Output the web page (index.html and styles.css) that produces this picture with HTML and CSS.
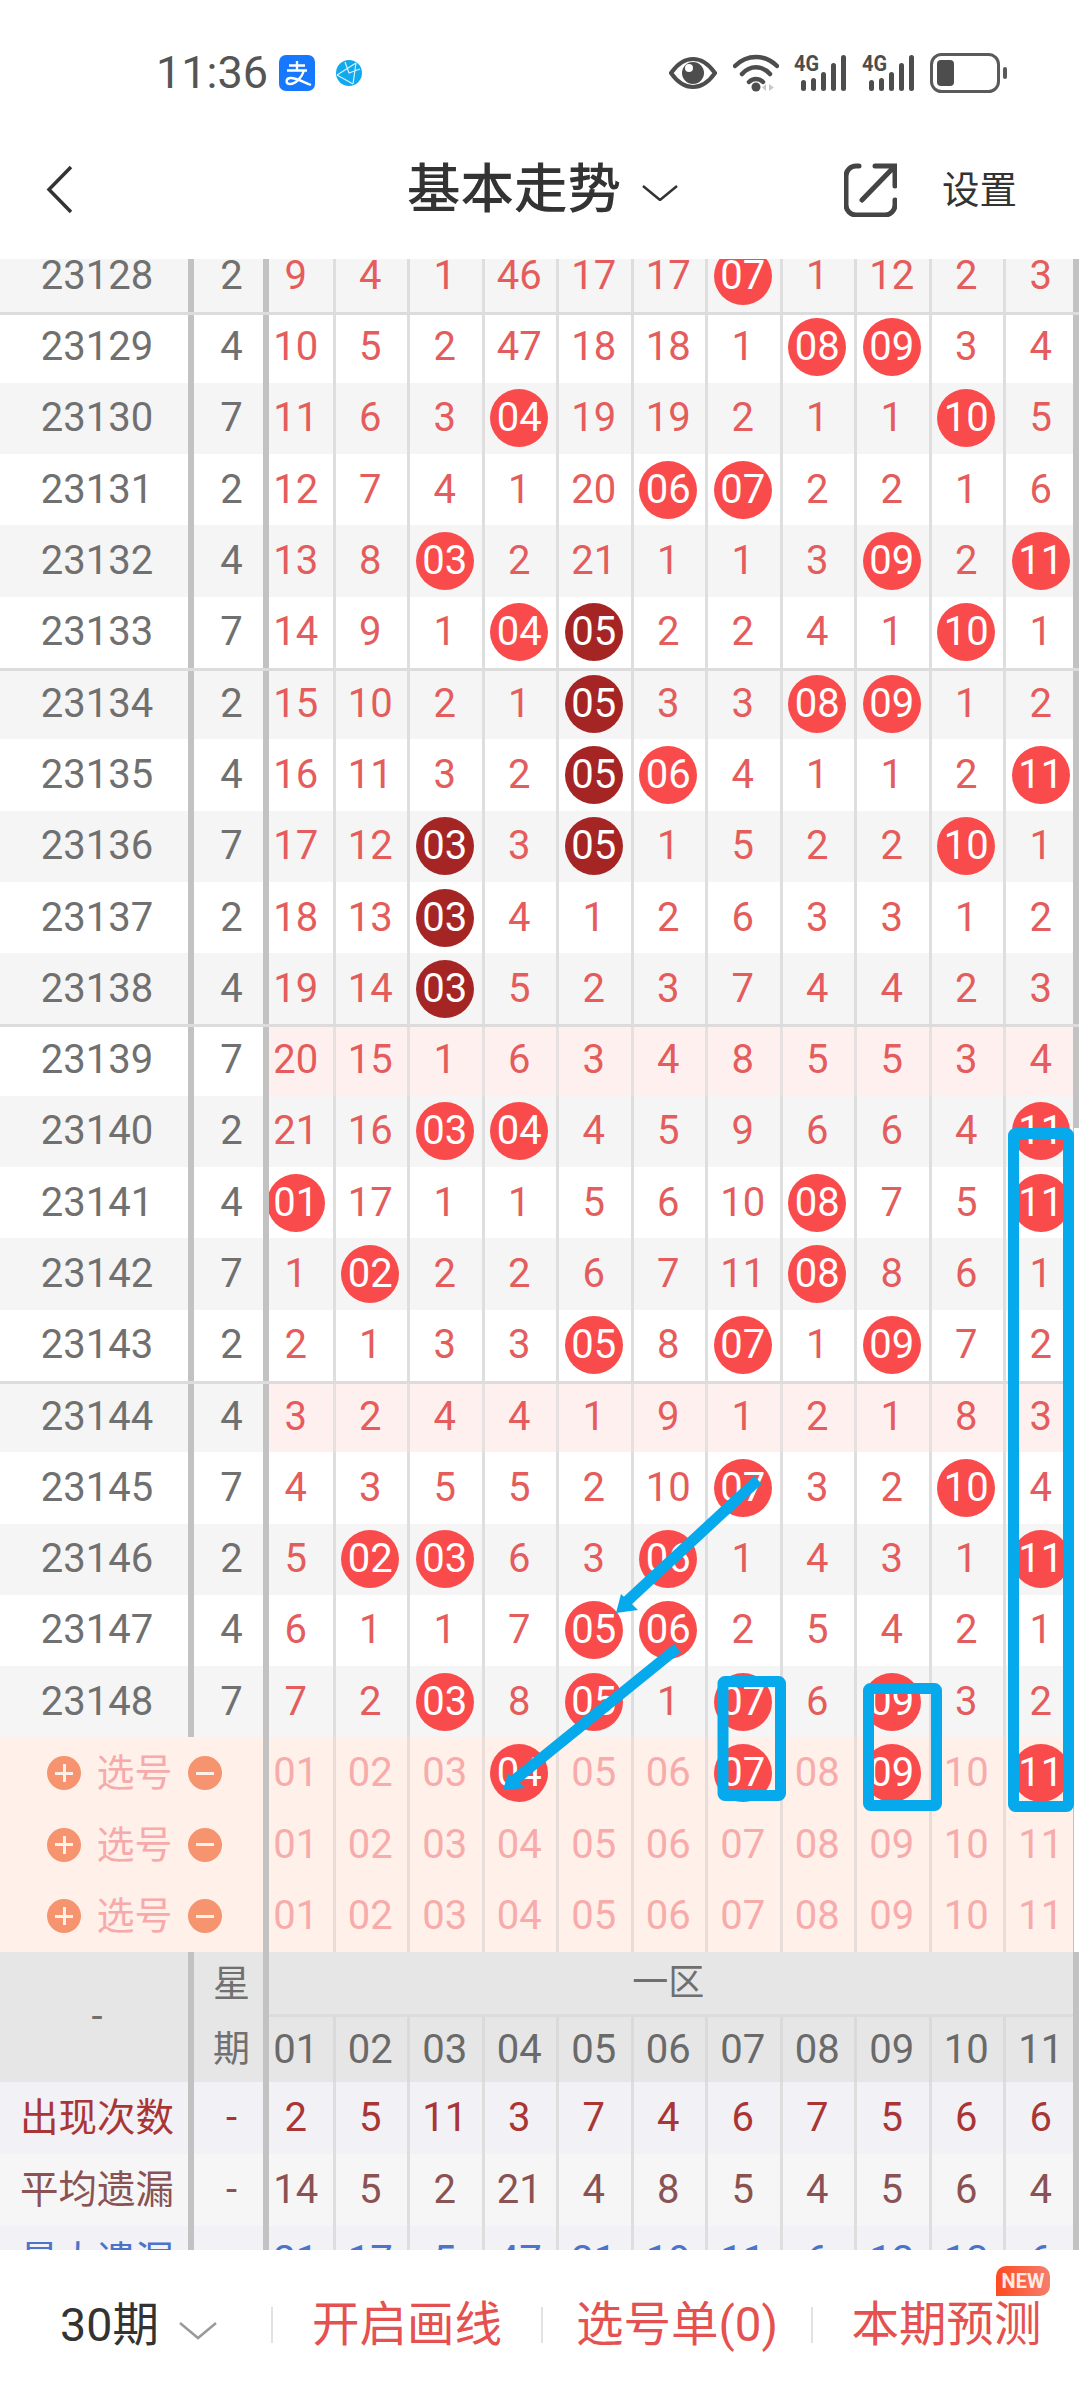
FILE: index.html
```html
<!DOCTYPE html>
<html lang="zh">
<head>
<meta charset="utf-8">
<title>基本走势</title>
<link rel="stylesheet" href="styles.css">
</head>
<body>
<div class="page">
  <header class="status">
    <span class="time">11:36</span>
    <svg class="alipay" viewBox="0 0 36 36"><rect width="36" height="36" rx="7" fill="#1677ff"/><path d="M10 10.500H26M18 6V15M8 15.500H28M25 15.500C23 22 17 29 11 29C6.500 29 6.500 23.500 11 23C17 22.500 24 27 32 30" fill="none" stroke="#fff" stroke-width="2.400"/></svg>
    <svg class="globe" viewBox="0 0 26 26"><circle cx="13" cy="13" r="13" fill="#10a9ee"/><path d="M1 15L20 3M1 15L17 24M20 3L17 24M9 2L13 13L24 9" fill="none" stroke="#d5f2ff" stroke-width="1.200"/></svg>
    <svg class="eye" viewBox="0 0 48 32"><path d="M2 16C9 6 16 2 24 2S39 6 46 16C39 26 32 30 24 30S9 26 2 16Z" fill="none" stroke="#4d4d4d" stroke-width="4"/><circle cx="24" cy="16" r="11" fill="#4d4d4d"/><circle cx="20" cy="11" r="4" fill="#fff"/></svg>
    <svg class="wifi" viewBox="0 0 46 38"><path d="M2 12C14 0 32 0 44 12M9 20C17 11 29 11 37 20M16 28C20 24 26 24 30 28" fill="none" stroke="#4d4d4d" stroke-width="4.500" stroke-linecap="round"/><circle cx="23" cy="33" r="4.500" fill="#4d4d4d"/><path d="M33 30V37L29 33.500ZM36 30V37L41 33.500Z" fill="#c8c8c8"/></svg>
    <svg class="signal" viewBox="0 0 53 38"><text x="0" y="17" class="g4" textLength="25" lengthAdjust="spacingAndGlyphs">4G</text><rect x="7" y="26" width="5" height="11" rx="2.500"/><rect x="17" y="24" width="5" height="13" rx="2.500"/><rect x="27" y="18" width="5" height="19" rx="2.500"/><rect x="37" y="9" width="5" height="28" rx="2.500"/><rect x="47" y="1" width="5" height="36" rx="2.500"/></svg>
    <svg class="signal second" viewBox="0 0 53 38"><text x="0" y="17" class="g4" textLength="25" lengthAdjust="spacingAndGlyphs">4G</text><rect x="7" y="26" width="5" height="11" rx="2.500"/><rect x="17" y="24" width="5" height="13" rx="2.500"/><rect x="27" y="18" width="5" height="19" rx="2.500"/><rect x="37" y="9" width="5" height="28" rx="2.500"/><rect x="47" y="1" width="5" height="36" rx="2.500"/></svg>
    <svg class="battery" viewBox="0 0 78 40"><rect x="1.500" y="1.500" width="67" height="37" rx="10" fill="none" stroke="#5a5a5a" stroke-width="3"/><rect x="7" y="7" width="17" height="26" rx="4" fill="#4d4d4d"/><rect x="73" y="14" width="4" height="12" rx="2" fill="#5a5a5a"/></svg>
  </header>

  <nav class="nav">
    <svg class="back" viewBox="0 0 27 49"><path d="M25 2L3 24.500L25 47" fill="none" stroke="#333" stroke-width="3.500"/></svg>
    <h1 class="title">基本走势</h1>
    <svg class="title-arrow" viewBox="0 0 36 16"><path d="M1 1L18 15L35 1" fill="none" stroke="#333" stroke-width="2.500"/></svg>
    <svg class="share" viewBox="0 0 53 54"><path d="M15 3H12A10 10 0 0 0 2 13V42A10 10 0 0 0 12 52H41A10 10 0 0 0 51 42V37M18 37L50 4M31 3H51V23" fill="none" stroke="#444" stroke-width="5" stroke-linecap="round"/></svg>
    <span class="settings">设置</span>
  </nav>

  <main class="scroll">
    <div class="sheet">
      <div class="r alt"><div class="a">23128</div><div class="b">2</div><div class="c">9</div><div class="c">4</div><div class="c">1</div><div class="c">46</div><div class="c">17</div><div class="c">17</div><div class="c"><b>07</b></div><div class="c">1</div><div class="c">12</div><div class="c">2</div><div class="c">3</div></div>
      <div class="r mark"><div class="a">23129</div><div class="b">4</div><div class="c">10</div><div class="c">5</div><div class="c">2</div><div class="c">47</div><div class="c">18</div><div class="c">18</div><div class="c">1</div><div class="c"><b>08</b></div><div class="c"><b>09</b></div><div class="c">3</div><div class="c">4</div></div>
      <div class="r alt"><div class="a">23130</div><div class="b">7</div><div class="c">11</div><div class="c">6</div><div class="c">3</div><div class="c"><b>04</b></div><div class="c">19</div><div class="c">19</div><div class="c">2</div><div class="c">1</div><div class="c">1</div><div class="c"><b>10</b></div><div class="c">5</div></div>
      <div class="r"><div class="a">23131</div><div class="b">2</div><div class="c">12</div><div class="c">7</div><div class="c">4</div><div class="c">1</div><div class="c">20</div><div class="c"><b>06</b></div><div class="c"><b>07</b></div><div class="c">2</div><div class="c">2</div><div class="c">1</div><div class="c">6</div></div>
      <div class="r alt"><div class="a">23132</div><div class="b">4</div><div class="c">13</div><div class="c">8</div><div class="c"><b>03</b></div><div class="c">2</div><div class="c">21</div><div class="c">1</div><div class="c">1</div><div class="c">3</div><div class="c"><b>09</b></div><div class="c">2</div><div class="c"><b>11</b></div></div>
      <div class="r"><div class="a">23133</div><div class="b">7</div><div class="c">14</div><div class="c">9</div><div class="c">1</div><div class="c"><b>04</b></div><div class="c"><b class="d">05</b></div><div class="c">2</div><div class="c">2</div><div class="c">4</div><div class="c">1</div><div class="c"><b>10</b></div><div class="c">1</div></div>
      <div class="r alt mark"><div class="a">23134</div><div class="b">2</div><div class="c">15</div><div class="c">10</div><div class="c">2</div><div class="c">1</div><div class="c"><b class="d">05</b></div><div class="c">3</div><div class="c">3</div><div class="c"><b>08</b></div><div class="c"><b>09</b></div><div class="c">1</div><div class="c">2</div></div>
      <div class="r"><div class="a">23135</div><div class="b">4</div><div class="c">16</div><div class="c">11</div><div class="c">3</div><div class="c">2</div><div class="c"><b class="d">05</b></div><div class="c"><b>06</b></div><div class="c">4</div><div class="c">1</div><div class="c">1</div><div class="c">2</div><div class="c"><b>11</b></div></div>
      <div class="r alt"><div class="a">23136</div><div class="b">7</div><div class="c">17</div><div class="c">12</div><div class="c"><b class="d">03</b></div><div class="c">3</div><div class="c"><b class="d">05</b></div><div class="c">1</div><div class="c">5</div><div class="c">2</div><div class="c">2</div><div class="c"><b>10</b></div><div class="c">1</div></div>
      <div class="r"><div class="a">23137</div><div class="b">2</div><div class="c">18</div><div class="c">13</div><div class="c"><b class="d">03</b></div><div class="c">4</div><div class="c">1</div><div class="c">2</div><div class="c">6</div><div class="c">3</div><div class="c">3</div><div class="c">1</div><div class="c">2</div></div>
      <div class="r alt"><div class="a">23138</div><div class="b">4</div><div class="c">19</div><div class="c">14</div><div class="c"><b class="d">03</b></div><div class="c">5</div><div class="c">2</div><div class="c">3</div><div class="c">7</div><div class="c">4</div><div class="c">4</div><div class="c">2</div><div class="c">3</div></div>
      <div class="r mark pink"><div class="a">23139</div><div class="b">7</div><div class="c">20</div><div class="c">15</div><div class="c">1</div><div class="c">6</div><div class="c">3</div><div class="c">4</div><div class="c">8</div><div class="c">5</div><div class="c">5</div><div class="c">3</div><div class="c">4</div></div>
      <div class="r alt"><div class="a">23140</div><div class="b">2</div><div class="c">21</div><div class="c">16</div><div class="c"><b>03</b></div><div class="c"><b>04</b></div><div class="c">4</div><div class="c">5</div><div class="c">9</div><div class="c">6</div><div class="c">6</div><div class="c">4</div><div class="c"><b>11</b></div></div>
      <div class="r"><div class="a">23141</div><div class="b">4</div><div class="c"><b>01</b></div><div class="c">17</div><div class="c">1</div><div class="c">1</div><div class="c">5</div><div class="c">6</div><div class="c">10</div><div class="c"><b>08</b></div><div class="c">7</div><div class="c">5</div><div class="c"><b>11</b></div></div>
      <div class="r alt"><div class="a">23142</div><div class="b">7</div><div class="c">1</div><div class="c"><b>02</b></div><div class="c">2</div><div class="c">2</div><div class="c">6</div><div class="c">7</div><div class="c">11</div><div class="c"><b>08</b></div><div class="c">8</div><div class="c">6</div><div class="c">1</div></div>
      <div class="r"><div class="a">23143</div><div class="b">2</div><div class="c">2</div><div class="c">1</div><div class="c">3</div><div class="c">3</div><div class="c"><b>05</b></div><div class="c">8</div><div class="c"><b>07</b></div><div class="c">1</div><div class="c"><b>09</b></div><div class="c">7</div><div class="c">2</div></div>
      <div class="r alt mark pink"><div class="a">23144</div><div class="b">4</div><div class="c">3</div><div class="c">2</div><div class="c">4</div><div class="c">4</div><div class="c">1</div><div class="c">9</div><div class="c">1</div><div class="c">2</div><div class="c">1</div><div class="c">8</div><div class="c">3</div></div>
      <div class="r"><div class="a">23145</div><div class="b">7</div><div class="c">4</div><div class="c">3</div><div class="c">5</div><div class="c">5</div><div class="c">2</div><div class="c">10</div><div class="c"><b>07</b></div><div class="c">3</div><div class="c">2</div><div class="c"><b>10</b></div><div class="c">4</div></div>
      <div class="r alt"><div class="a">23146</div><div class="b">2</div><div class="c">5</div><div class="c"><b>02</b></div><div class="c"><b>03</b></div><div class="c">6</div><div class="c">3</div><div class="c"><b>06</b></div><div class="c">1</div><div class="c">4</div><div class="c">3</div><div class="c">1</div><div class="c"><b>11</b></div></div>
      <div class="r"><div class="a">23147</div><div class="b">4</div><div class="c">6</div><div class="c">1</div><div class="c">1</div><div class="c">7</div><div class="c"><b>05</b></div><div class="c"><b>06</b></div><div class="c">2</div><div class="c">5</div><div class="c">4</div><div class="c">2</div><div class="c">1</div></div>
      <div class="r alt"><div class="a">23148</div><div class="b">7</div><div class="c">7</div><div class="c">2</div><div class="c"><b>03</b></div><div class="c">8</div><div class="c"><b>05</b></div><div class="c">1</div><div class="c"><b>07</b></div><div class="c">6</div><div class="c"><b>09</b></div><div class="c">3</div><div class="c">2</div></div>

      <div class="r sel"><div class="pick"><span class="pm plus"></span><span class="pick-label">选号</span><span class="pm"></span></div><div class="c">01</div><div class="c">02</div><div class="c">03</div><div class="c"><b>04</b></div><div class="c">05</div><div class="c">06</div><div class="c"><b>07</b></div><div class="c">08</div><div class="c"><b>09</b></div><div class="c">10</div><div class="c"><b>11</b></div></div>
      <div class="r sel"><div class="pick"><span class="pm plus"></span><span class="pick-label">选号</span><span class="pm"></span></div><div class="c">01</div><div class="c">02</div><div class="c">03</div><div class="c">04</div><div class="c">05</div><div class="c">06</div><div class="c">07</div><div class="c">08</div><div class="c">09</div><div class="c">10</div><div class="c">11</div></div>
      <div class="r sel"><div class="pick"><span class="pm plus"></span><span class="pick-label">选号</span><span class="pm"></span></div><div class="c">01</div><div class="c">02</div><div class="c">03</div><div class="c">04</div><div class="c">05</div><div class="c">06</div><div class="c">07</div><div class="c">08</div><div class="c">09</div><div class="c">10</div><div class="c">11</div></div>

      <div class="r head">
        <div class="a dash">-</div>
        <div class="b week"><span>星</span><span>期</span></div>
        <div class="zone">一区</div>
        <div class="c">01</div><div class="c">02</div><div class="c">03</div><div class="c">04</div><div class="c">05</div><div class="c">06</div><div class="c">07</div><div class="c">08</div><div class="c">09</div><div class="c">10</div><div class="c">11</div>
      </div>

      <div class="r stat count"><div class="a">出现次数</div><div class="b">-</div><div class="c">2</div><div class="c">5</div><div class="c">11</div><div class="c">3</div><div class="c">7</div><div class="c">4</div><div class="c">6</div><div class="c">7</div><div class="c">5</div><div class="c">6</div><div class="c">6</div></div>
      <div class="r stat avg"><div class="a">平均遗漏</div><div class="b">-</div><div class="c">14</div><div class="c">5</div><div class="c">2</div><div class="c">21</div><div class="c">4</div><div class="c">8</div><div class="c">5</div><div class="c">4</div><div class="c">5</div><div class="c">6</div><div class="c">4</div></div>
      <div class="r stat max"><div class="a">最大遗漏</div><div class="b">-</div><div class="c">21</div><div class="c">17</div><div class="c">5</div><div class="c">47</div><div class="c">21</div><div class="c">19</div><div class="c">11</div><div class="c">6</div><div class="c">12</div><div class="c">13</div><div class="c">6</div></div>
    </div>
  </main>

  <footer class="foot">
    <div class="foot-item periods"><span>30期</span><svg class="foot-arrow" viewBox="0 0 38 18"><path d="M1 1L19 16L37 1" fill="none" stroke="#9a9a9a" stroke-width="2.500"/></svg></div>
    <div class="foot-item action">开启画线</div>
    <div class="foot-item action">选号单(0)</div>
    <div class="foot-item action">本期预测<span class="new">NEW</span></div>
  </footer>

  <svg class="marks" viewBox="0 0 1080 2400">
    <rect class="blank" x="1074" y="1128" width="6" height="824"/>
    <rect class="box" x="723" y="1681.500" width="57.500" height="114" rx="2"/>
    <rect class="box" x="868.500" y="1688.500" width="68" height="117" rx="2"/>
    <rect class="box" x="1013.500" y="1133.500" width="55" height="673" rx="2"/>
    <path class="line" d="M758 1480L624 1604"/>
    <path class="head-mark" d="M616 1613L621 1594L638 1610Z"/>
    <path class="line" d="M677.500 1648L512 1782"/>
    <path class="head-mark" d="M503 1790L508 1774L526 1788Z"/>
  </svg>
</div>
</body>
</html>
```

FILE: styles.css
```css
* {
  box-sizing: border-box;
}

html,
body {
  margin: 0;
  background: #fff;
}

.page {
  position: relative;
  display: flex;
  flex-direction: column;
  width: 1080px;
  height: 2400px;
  overflow: hidden;
  font-family: Roboto, "Noto Sans CJK SC", sans-serif;
}

/* status bar */
.status {
  display: flex;
  align-items: center;
  flex: none;
  height: 120px;
  padding: 26px 0 0 156px;
}

.time {
  width: 123px;
  font-size: 45px;
  line-height: 54px;
  color: #555;
}

.alipay {
  width: 36px;
  height: 36px;
}

.globe {
  width: 26px;
  height: 26px;
  margin-left: 21px;
}

.eye {
  width: 48px;
  height: 32px;
  margin-left: 307px;
}

.wifi {
  width: 46px;
  height: 38px;
  margin-left: 16px;
}

.signal {
  width: 53px;
  height: 38px;
  margin-left: 15px;
  fill: #4d4d4d;
}

.signal.second {
  margin-left: 15px;
}

.g4 {
  font-family: Roboto, sans-serif;
  font-size: 22px;
  font-weight: 700;
}

.battery {
  width: 78px;
  height: 40px;
  margin-left: 15px;
}

/* nav bar */
.nav {
  display: flex;
  align-items: center;
  flex: none;
  height: 139px;
  padding-left: 46px;
}

.back {
  width: 27px;
  height: 49px;
}

.title {
  margin: 0 0 0 334px;
  font-size: 53.500px;
  font-weight: 500;
  line-height: 70px;
  color: #333;
}

.title-arrow {
  width: 36px;
  height: 16px;
  margin: 6px 0 0 21px;
}

.share {
  width: 53px;
  height: 54px;
  margin-left: 166px;
}

.settings {
  margin-left: 45px;
  font-size: 37.500px;
  line-height: 50px;
  color: #333;
}

/* table */
.scroll {
  position: relative;
  flex: none;
  width: 1079px;
  height: 1991px;
  overflow: hidden;
}

.scroll::after {
  content: "";
  position: absolute;
  top: 0;
  right: 0;
  bottom: 0;
  width: 6px;
  background: #c2c2c2;
}

.sheet {
  margin-top: -18.800px;
}

.r {
  position: relative;
  display: grid;
  grid-template-columns: 194px 64.400px repeat(11, 74.500px);
  grid-auto-rows: 71.300px;
  background-color: #fff;
  font-size: 40px;
  line-height: 48px;
  color: #e45c5c;
}

.r.alt {
  background-color: #f5f5f5;
}

.r.mark::after {
  content: "";
  position: absolute;
  top: 0;
  left: 0;
  right: 0;
  height: 3px;
  background: #dcdcdc;
  z-index: 2;
}

.a,
.b {
  position: relative;
  display: flex;
  align-items: center;
  justify-content: center;
  color: #707070;
  background-color: inherit;
  background-image: linear-gradient(#c2c2c2, #c2c2c2);
  background-repeat: no-repeat;
  background-position: right top;
  background-size: 6px 100%;
}

.b {
  z-index: 1;
  width: 75px;
}

.c {
  display: flex;
  align-items: center;
  justify-content: center;
  background-image: linear-gradient(#dedede, #dedede);
  background-repeat: no-repeat;
  background-position: left top;
  background-size: 3px 100%;
}

.c b {
  display: flex;
  align-items: center;
  justify-content: center;
  width: 58px;
  height: 58px;
  border-radius: 50%;
  background: #f94b4b;
  font-weight: 400;
  color: #fff;
}

.c b.d {
  background: #a52525;
}

.pink .c {
  background-color: #fff0f0;
  background-image: linear-gradient(#e6e0e0, #e6e0e0);
}

/* selection rows */
.sel {
  grid-template-columns: 258.400px repeat(11, 74.500px);
  grid-auto-rows: 71.600px;
  background-color: #fff0ea;
  color: #f8abab;
}

.sel .c {
  background-image: linear-gradient(#e8ddd9, #e8ddd9);
}

.pick {
  position: relative;
  z-index: 1;
  display: flex;
  align-items: center;
  justify-content: center;
  gap: 15px;
  width: 269px;
  background-color: #fff0ea;
  background-image: linear-gradient(#c2c2c2, #c2c2c2);
  background-repeat: no-repeat;
  background-position: right top;
  background-size: 6px 100%;
}

.pm {
  position: relative;
  flex: none;
  width: 34px;
  height: 34px;
  border-radius: 50%;
  background: #f5946e;
}

.pm::before,
.plus::after {
  content: "";
  position: absolute;
  top: 15.500px;
  left: 8px;
  width: 18px;
  height: 3px;
  background: #fff0ea;
}

.plus::after {
  top: 8px;
  left: 15.500px;
  width: 3px;
  height: 18px;
}

.pick-label {
  font-size: 38px;
  color: #f7aaaa;
}

/* header of the statistics */
.head {
  grid-template-rows: 65px 65px;
  grid-auto-rows: 65px;
  background-color: #e6e6e6;
  color: #6a6a6a;
}

.dash {
  grid-row: 1 / 3;
}

.week {
  grid-row: 1 / 3;
  flex-direction: column;
  justify-content: space-around;
  font-size: 37px;
}

.zone {
  grid-column: 3 / -1;
  display: flex;
  align-items: center;
  justify-content: center;
  border-bottom: 3px solid #dcdcdc;
  font-size: 36px;
  color: #6f6f6f;
}

.head .c {
  background-image: linear-gradient(#dadada, #dadada);
}

/* statistics */
.stat {
  grid-auto-rows: 71.700px;
}

.stat .a {
  font-size: 38.500px;
}

.count,
.max {
  background-color: #f1f1f6;
}

.avg {
  background-color: #f6f6f6;
}

.count,
.count .a,
.count .b {
  color: #a93535;
}

.avg,
.avg .a,
.avg .b {
  color: #8a5252;
}

.max,
.max .a,
.max .b {
  color: #4a74c9;
}

/* footer */
.foot {
  position: relative;
  z-index: 3;
  display: grid;
  grid-template-columns: 271px 270px 270px 269px;
  align-items: center;
  flex: none;
  height: 150px;
  background: #fff;
}

.foot-item {
  position: relative;
  display: flex;
  align-items: center;
  justify-content: center;
  height: 36px;
  font-size: 47.500px;
  line-height: 36px;
}

.action {
  border-left: 2px solid #e2e2e2;
  color: #e55050;
}

.periods {
  gap: 20px;
  padding-left: 6px;
  font-size: 46.500px;
  color: #333;
}

.foot-arrow {
  width: 38px;
  height: 18px;
  margin-top: 12px;
}

.new {
  position: absolute;
  top: -41px;
  right: 30px;
  width: 54px;
  height: 30px;
  border-radius: 10px 10px 10px 0;
  background: linear-gradient(90deg, #ff4a20, #f47f6c);
  font-size: 20px;
  font-weight: 700;
  line-height: 30px;
  text-align: center;
  color: #ffe9e4;
}

/* hand-drawn marks over the chart */
.marks {
  position: absolute;
  top: 0;
  left: 0;
  z-index: 4;
  width: 1080px;
  height: 2400px;
  pointer-events: none;
}

.blank {
  fill: #fff;
}

.box {
  fill: none;
  stroke: #05a9ec;
  stroke-width: 11;
}

.line {
  fill: none;
  stroke: #05a9ec;
  stroke-width: 11;
}

.head-mark {
  fill: #05a9ec;
}
```
